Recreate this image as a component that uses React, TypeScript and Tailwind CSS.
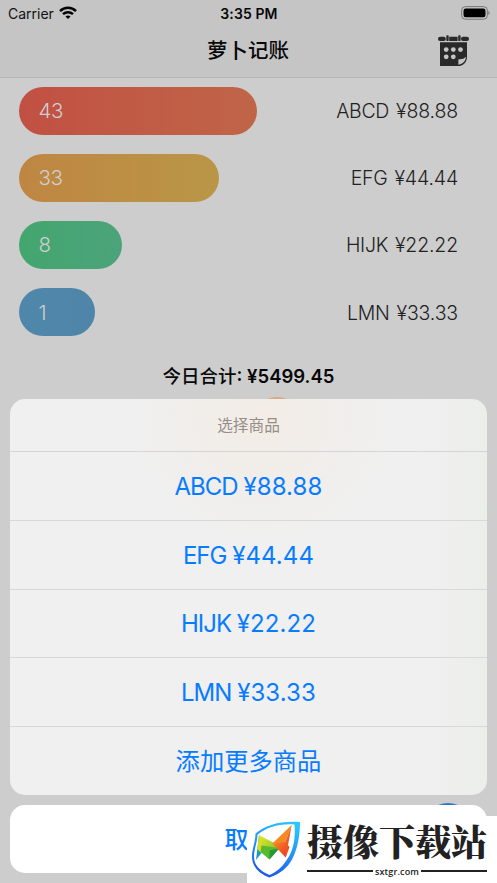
import React from 'react';

interface Product {
  name: string;
  price: string;
  count: number;
  bar: string;
}

const products: Product[] = [
  { name: 'ABCD', price: '88.88', count: 43, bar: 'w-[238px] from-[#c15043] to-[#c06548]' },
  { name: 'EFG', price: '44.44', count: 33, bar: 'w-[200px] from-[#bf8642] to-[#b99647]' },
  { name: 'HIJK', price: '22.22', count: 8, bar: 'w-[103px] from-[#43a66e] to-[#4ca37a]' },
  { name: 'LMN', price: '33.33', count: 1, bar: 'w-[76px] from-[#4f87ab] to-[#4f85a8]' },
];

const WifiIcon = () => (
  <svg className="h-[14px] w-[18px]" viewBox="0 0 18 14" fill="none" stroke="#050505" strokeWidth="2.5">
    <path d="M1 5.1C5.4 .7 12.6 .7 17 5.1" />
    <path d="M4 8.2c2.8-2.7 7.2-2.7 10 0" />
    <path d="M6.5 10.4c1.4-1.3 3.6-1.3 5 0L9 13z" fill="#050505" stroke="none" />
  </svg>
);

const BatteryIcon = () => (
  <svg className="h-[14px] w-[29px]" viewBox="0 0 29 14">
    <rect x=".6" y=".6" width="25.8" height="12.6" rx="3.8" fill="none" stroke="#777" strokeWidth="1" />
    <rect x="2.5" y="2.5" width="22" height="8.8" rx="2.2" fill="#000" />
    <path d="M27.4 4.8c1.6.8 1.6 3.4 0 4.2z" fill="#777" />
  </svg>
);

const CalendarIcon = () => (
  <svg className="h-8 w-[31px]" viewBox="0 0 31 32">
    <g fill="#292929">
      <rect x="0" y="1.7" width="7.8" height="4.4" rx="2.1" />
      <rect x="11.2" y="1.7" width="8.4" height="4.4" rx=".4" />
      <rect x="23" y="1.7" width="8" height="4.4" rx="2.1" />
      <rect x="8.3" y=".3" width="2.4" height="5.8" rx=".8" />
      <rect x="20.2" y=".3" width="2.4" height="5.8" rx=".8" />
      <path d="M2 7.2h27v14.2c0 6-3.8 9.6-9.6 9.6H2z" />
    </g>
    <path d="M20.4 29.8v-5.6c3.2.5 5.6-.4 7.5-2.4-.2 4.4-2.8 7.2-7.5 8z" fill="#c5c5c5" />
    <g fill="#c5c5c5">
      <circle cx="8.2" cy="14.6" r="2.4" />
      <circle cx="15.3" cy="14.6" r="2.4" />
      <circle cx="22.5" cy="14.6" r="2.4" />
      <circle cx="8.2" cy="21.8" r="2.4" />
      <circle cx="15.3" cy="21.8" r="2.4" />
    </g>
  </svg>
);

const ShieldLogo = () => (
  <svg className="h-[58px] w-[51px] shrink-0" viewBox="0 0 51 58">
    <defs>
      <linearGradient id="shield" x1=".7" y1="0" x2=".35" y2="1">
        <stop offset="0" stopColor="#2cc4fb" />
        <stop offset=".5" stopColor="#2492f5" />
        <stop offset="1" stopColor="#1b55ed" />
      </linearGradient>
      <linearGradient id="leaf" x1="0" y1="0" x2="1" y2="1">
        <stop offset="0" stopColor="#ece72b" />
        <stop offset="1" stopColor="#7dc52c" />
      </linearGradient>
      <linearGradient id="flame" x1="0" y1="0" x2="1" y2="1">
        <stop offset="0" stopColor="#f58a22" />
        <stop offset="1" stopColor="#ea2f2b" />
      </linearGradient>
    </defs>
    <path
      d="M49 1C31-.5 16 3 4.5 12.5 4.2 22 1 28 1 35.5 1 46.5 9 53 18.5 56.5c10-3.5 18-9.5 22.5-18C46.500 28 49 15 49 1zM43.500 3.500c1 13-.5 25-7.500 35-4.500 7-10 12.500-17.500 15.500C10 50.500 3 45 3 35.500 3 28 6.200 22.500 6.500 13.800 16 6 28 2.500 43.500 3.500z"
      fill="url(#shield)"
      fillRule="evenodd"
    />
    <path d="M8 14 5 39 12.500 29.500z" fill="#1b9ac0" />
    <path d="M8 14l14.500 7.800L28.500 27 12 29z" fill="url(#leaf)" />
    <path d="M8 14l5.500 14.500L10 32 6.300 28z" fill="#d4dc2a" />
    <path d="M10.500 24.500 28.500 27l-10 11.500L9.500 31z" fill="#59b82d" />
    <path d="M18.500 29.500 28.500 27l-10 11.500z" fill="#239a3a" />
    <path d="M40.700 4 21.300 22.500 34 22z" fill="#f58a22" />
    <path d="M21.300 22.500 34 21l4.500 5-3.800 10.500z" fill="url(#flame)" />
    <path d="M40.700 4 34 22l.7 14.500z" fill="#ec5a27" />
  </svg>
);

const StatusBar = () => (
  <div className="grid h-[26px] grid-cols-3 items-center pr-[7px] pl-2">
    <div className="flex items-center gap-[5px] text-[14px] text-[#111]">
      <span>Carrier</span>
      <WifiIcon />
    </div>
    <div className="text-center text-[14px] font-semibold tracking-[.1px]">3:35 PM</div>
    <div className="flex justify-end"><BatteryIcon /></div>
  </div>
);

const ActionSheet = () => (
  <div className="absolute inset-x-[10px] top-[399px] flex flex-col gap-[10px] text-center text-[#087cff]">
    <div className="h-[396px] overflow-hidden rounded-[15px] bg-[#f0f0f0] bg-[radial-gradient(circle_at_252px_15px,#f3ece6_0px,#f0efed_105px,transparent_130px),linear-gradient(90deg,transparent_85%,#eceeeb)]">
      <div className="flex h-[53px] items-center justify-center border-b border-[#d5d5d5] pt-[2px] text-[15.7px] text-[#958e88]">
        选择商品
      </div>
      {products.map(product => (
        <div
          key={product.name}
          className="flex h-[68.75px] items-center justify-center border-b border-[#d8d8d8] pt-[2px] text-[24px] whitespace-pre"
        >
          <span className="tracking-[-1px]">{product.name} </span>
          <span className="tracking-[.1px]">¥{product.price}</span>
        </div>
      ))}
      <div className="flex h-[68px] items-center justify-center text-[24.3px]">添加更多商品</div>
    </div>
    <div className="flex h-[68px] items-center justify-center rounded-[15px] bg-white pt-[2px] text-[24px] font-medium">
      取消
    </div>
  </div>
);

const SiteBadge = () => (
  <div className="absolute right-0 bottom-0 flex h-[67px] w-[250px] bg-white pt-[5px] pl-[4px]">
    <ShieldLogo />
    <div className="ml-[5px] w-[180px] text-[#222]">
      <div className="h-[43px] text-center font-['Noto_Serif_CJK_SC','Noto_Sans_CJK_SC',serif] text-[36px] leading-[40px] font-black whitespace-nowrap">
        摄像下载站
      </div>
      <div className="flex h-[14px] items-center gap-[2px]">
        <span className="h-[2px] flex-1 bg-[#222]" />
        <span className="font-['Open_Sans',sans-serif] text-[9px] leading-none font-semibold tracking-[.15px]">sxtgr.com</span>
        <span className="h-[2px] flex-1 bg-[#222]" />
      </div>
    </div>
  </div>
);

const App = () => {
  return (
    <div className="relative h-[883px] w-[497px] overflow-hidden bg-[#cdcdcd] font-[Inter,'Noto_Sans_CJK_SC',sans-serif] text-[#080808]">
      <header className="h-[78px] border-b border-[#b5b5b5] bg-[#c5c5c5]">
        <StatusBar />
        <div className="grid h-[50px] grid-cols-[1fr_auto_1fr] items-center pr-7">
          <h1 className="col-start-2 ml-[27px] pt-px text-[20.5px] font-medium">萝卜记账</h1>
          <div className="flex justify-end"><CalendarIcon /></div>
        </div>
      </header>

      <main>
        <div className="flex flex-col gap-[19.3px] pt-[8.5px] pr-[39px] pl-[19px]">
          {products.map(product => (
            <div key={product.name} className="flex h-12 items-center justify-between">
              <div className={`flex h-12 items-center rounded-full bg-linear-to-r pt-px pl-[19.5px] text-[20.5px] font-light tracking-[-.3px] text-[#cfcfcf] ${product.bar}`}>
                {product.count}
              </div>
              <div className="flex gap-[7px] pt-[2px] text-[19.5px] font-light text-[#222]">
                <span className="tracking-[-.3px]">{product.name}</span>
                <span className="tracking-[-.15px]">¥{product.price}</span>
              </div>
            </div>
          ))}
        </div>
        <div className="mt-[26px] text-center text-[18.5px] leading-[29px]">
          <span className="font-medium">今日合计</span>
          <span className="font-semibold">: ¥5499.45</span>
        </div>
      </main>

      {/* chart and add button peek out from behind the sheet */}
      <div className="absolute top-[397px] left-[253px] size-12 rounded-full bg-[#d6aa87]" />
      <div className="absolute top-[803px] left-[424px] size-12 rounded-full bg-[#3478c9]" />

      <ActionSheet />
      <SiteBadge />
    </div>
  );
};

export default App;
